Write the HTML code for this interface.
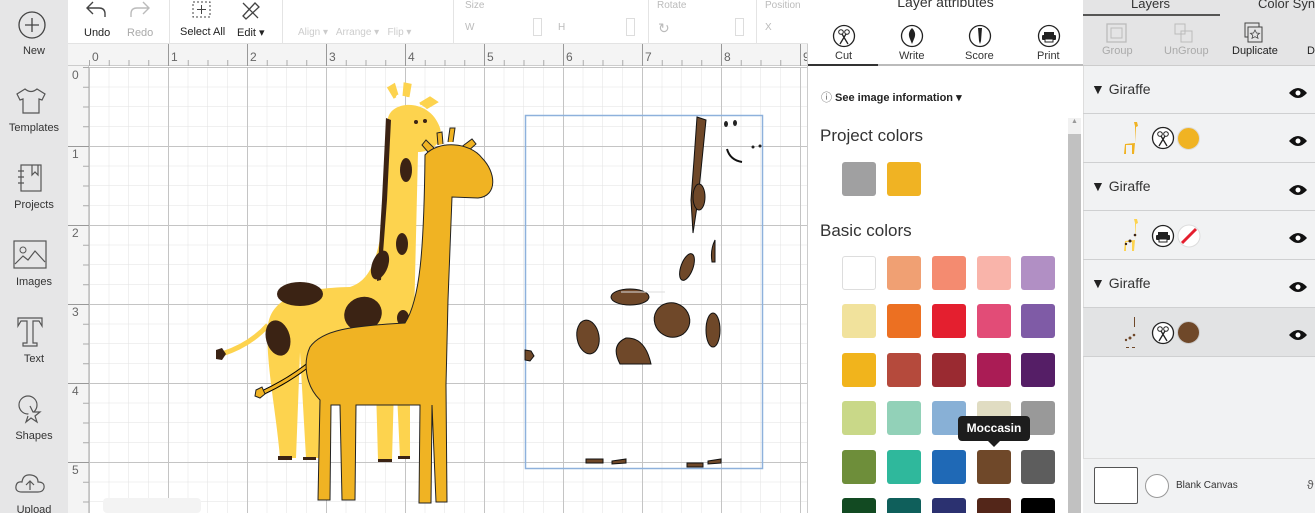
<!DOCTYPE html>
<html><head><meta charset="utf-8"><style>
*{box-sizing:border-box;margin:0;padding:0}
html,body{width:1315px;height:513px;overflow:hidden}
body{font-family:"Liberation Sans",Arial,sans-serif;background:#fff;position:relative;color:#222}
.abs{position:absolute}
.side{left:0;top:0;width:68px;height:513px;background:#e6e6e7}
.si{position:absolute;left:0;width:68px;text-align:center;font-size:11px;color:#333}
.tb{left:68px;top:0;width:740px;height:44px;background:#fff;border-bottom:1px solid #e3e3e3}
.tl{position:absolute;font-size:11px;color:#222;white-space:nowrap}
.fd{color:#ccc}
.sep{position:absolute;top:0;width:1px;height:44px;background:#e4e4e4}
.sw{position:absolute;width:34px;height:34px;border-radius:3px}
.lrow{position:absolute;left:1083px;width:232px;border-bottom:1px solid #cfd0d1}
</style></head><body>

<!-- sidebar -->
<div class="abs side">
 <svg class="abs" style="left:17px;top:10px" width="30" height="30"><circle cx="15" cy="15" r="13" fill="none" stroke="#444" stroke-width="1.3"/><path d="M15 8v14M8 15h14" stroke="#444" stroke-width="1.3"/></svg>
 <div class="si" style="top:45px">New</div>
 <svg class="abs" style="left:14px;top:87px" width="34" height="28"><path d="M11 2 L3 7 L6 13 L9 12 L9 26 L25 26 L25 12 L28 13 L31 7 L23 2 Q17 7 11 2Z" fill="none" stroke="#555" stroke-width="1.2"/></svg>
 <div class="si" style="top:122px">Templates</div>
 <svg class="abs" style="left:17px;top:163px" width="28" height="30"><rect x="4" y="2" width="20" height="26" fill="none" stroke="#555" stroke-width="1.2"/><path d="M15 2v10l3-3 3 3V2M1 8h6M1 14h6M1 20h6" fill="none" stroke="#555" stroke-width="1.2"/></svg>
 <div class="si" style="top:199px">Projects</div>
 <svg class="abs" style="left:13px;top:240px" width="34" height="30"><rect x="1" y="1" width="32" height="27" fill="none" stroke="#555" stroke-width="1.2"/><circle cx="10" cy="10" r="3" fill="none" stroke="#555"/><path d="M2 24 L10 16 L15 20 L22 11 L32 22" fill="none" stroke="#555" stroke-width="1.2"/></svg>
 <div class="si" style="top:276px">Images</div>
 <svg class="abs" style="left:16px;top:316px" width="28" height="32"><path d="M2 2h24v8l-3-5h-6v22h4v3H7v-3h4V5H5l-3 5z" fill="none" stroke="#555" stroke-width="1.2"/></svg>
 <div class="si" style="top:353px">Text</div>
 <svg class="abs" style="left:16px;top:394px" width="30" height="30"><circle cx="12" cy="11" r="9" fill="none" stroke="#555" stroke-width="1.2"/><path d="M14 12 L17 18 L24 18 L19 22 L21 28 L15 24 L10 28 L12 22" fill="#e6e6e7" stroke="#555" stroke-width="1.2"/></svg>
 <div class="si" style="top:430px">Shapes</div>
 <svg class="abs" style="left:14px;top:472px" width="32" height="24"><path d="M8 20 Q1 20 2 14 Q3 9 8 10 Q9 2 17 3 Q24 4 24 10 Q31 10 30 16 Q29 20 24 20Z" fill="none" stroke="#555" stroke-width="1.2"/><path d="M16 18v-8M12 13l4-4 4 4" fill="none" stroke="#555" stroke-width="1.2"/></svg>
 <div class="si" style="top:504px">Upload</div>
</div>

<!-- toolbar -->
<div class="abs tb">
 <svg class="abs" style="left:17px;top:0px" width="22" height="18"><path d="M8 2 L2 8 L8 14 M2 8 H14 Q20 8 20 14 V17" fill="none" stroke="#444" stroke-width="1.4"/></svg>
 <div class="tl" style="left:16px;top:27px">Undo</div>
 <svg class="abs" style="left:61px;top:0px" width="22" height="18"><path d="M14 2 L20 8 L14 14 M20 8 H8 Q2 8 2 14 V17" fill="none" stroke="#bbb" stroke-width="1.4"/></svg>
 <div class="tl fd" style="left:59px;top:27px;color:#aaa">Redo</div>
 <div class="sep" style="left:101px"></div>
 <svg class="abs" style="left:123px;top:0" width="22" height="20"><rect x="2" y="2" width="17" height="15" fill="none" stroke="#444" stroke-dasharray="2 2"/><path d="M10.5 5v9M6 9.5h9" stroke="#444"/></svg>
 <div class="tl" style="left:112px;top:26px">Select All</div>
 <svg class="abs" style="left:172px;top:0" width="22" height="20"><path d="M3 16 L15 3 L19 7 L6 19Z M3 3 L18 18" fill="none" stroke="#444" stroke-width="1.3"/></svg>
 <div class="tl" style="left:169px;top:26px">Edit ▾</div>
 <div class="sep" style="left:214px"></div>
 <div class="tl fd" style="left:230px;top:27px;font-size:10px">Align ▾ &nbsp; Arrange ▾ &nbsp; Flip ▾</div>
 <div class="sep" style="left:385px"></div>
 <div class="tl fd" style="left:397px;top:0px;font-size:10px;color:#bbb">Size</div>
 <div class="tl fd" style="left:397px;top:22px;font-size:10px;color:#bbb">W</div>
 <div class="tl fd" style="left:490px;top:22px;font-size:10px;color:#bbb">H</div>
 <div class="abs" style="left:465px;top:18px;width:9px;height:18px;border:1px solid #ddd"></div>
 <div class="abs" style="left:558px;top:18px;width:9px;height:18px;border:1px solid #ddd"></div>
 <div class="sep" style="left:580px"></div>
 <div class="tl fd" style="left:589px;top:0px;font-size:10px;color:#bbb">Rotate</div>
 <div class="tl fd" style="left:590px;top:20px;font-size:14px;color:#bbb">↻</div>
 <div class="abs" style="left:667px;top:18px;width:9px;height:18px;border:1px solid #ddd"></div>
 <div class="sep" style="left:688px"></div>
 <div class="tl fd" style="left:697px;top:0px;font-size:10px;color:#bbb">Position</div>
 <div class="tl fd" style="left:697px;top:22px;font-size:10px;color:#bbb">X</div>
</div>

<!-- rulers -->
<div class="abs" style="left:68px;top:44px;width:740px;height:22px;background:#f4f4f4;border-bottom:1px solid #ccc"></div>
<div class="abs" style="left:68px;top:66px;width:21px;height:447px;background:#f4f4f4;border-right:1px solid #ccc"></div>

<!-- canvas grid -->
<svg class="abs" style="left:0;top:0" width="808" height="513">
 <defs>
  <pattern id="mi" x="89" y="67" width="19.75" height="19.75" patternUnits="userSpaceOnUse"><path d="M0 0V19.75M0 0H19.75" stroke="#e2e2e2" stroke-width="1" fill="none"/></pattern>
  <pattern id="ma" x="89" y="67" width="79" height="79" patternUnits="userSpaceOnUse"><path d="M0.5 0V79M0 0.5H79" stroke="#c4c4c4" stroke-width="1" fill="none"/></pattern>
  <pattern id="rt" x="89" y="44" width="19.75" height="22" patternUnits="userSpaceOnUse"><path d="M0.5 16V22" stroke="#aaa" fill="none"/></pattern>
  <pattern id="rl" x="68" y="67" width="21" height="19.75" patternUnits="userSpaceOnUse"><path d="M15 0.5H21" stroke="#aaa" fill="none"/></pattern>
 </defs>
 <rect x="89" y="67" width="719" height="446" fill="url(#mi)"/>
 <rect x="89" y="67" width="719" height="446" fill="url(#ma)"/>
 <rect x="89" y="44" width="719" height="22" fill="url(#rt)"/>
 <rect x="68" y="67" width="21" height="446" fill="url(#rl)"/>
 <g fill="#666" font-size="12" font-family="Liberation Sans">
  <text x="92" y="61">0</text><text x="171" y="61">1</text><text x="250" y="61">2</text><text x="329" y="61">3</text><text x="408" y="61">4</text><text x="487" y="61">5</text><text x="566" y="61">6</text><text x="645" y="61">7</text><text x="724" y="61">8</text><text x="803" y="61">9</text>
  <text x="72" y="79">0</text><text x="72" y="158">1</text><text x="72" y="237">2</text><text x="72" y="316">3</text><text x="72" y="395">4</text><text x="72" y="474">5</text>
 </g>
 <g stroke="#999" stroke-width="1"><path d="M168.5 44V66M247.5 44V66M326.5 44V66M405.5 44V66M484.5 44V66M563.5 44V66M642.5 44V66M721.5 44V66M800.5 44V66"/><path d="M68 146.5H89M68 225.5H89M68 304.5H89M68 383.5H89M68 462.5H89"/></g>
 <rect x="103" y="498" width="98" height="15" rx="4" fill="#f3f3f3"/>
 <rect x="807" y="44" width="1" height="469" fill="#ccc"/>

 <!-- back giraffe -->
 <path d="M268 325 Q250 345 222 354" stroke="#fdd34e" stroke-width="5" fill="none"/>
 <path d="M216 350 l6 -2 l4 6 l-4 6 l-6 -1z" fill="#3b2314"/>
 <path d="M388 118 C392 100 430 98 440 128 C444 142 432 152 418 152 L414 320 L410 345 L410 458 L400 458 L395 350 L392 460 L378 460 L375 352 L322 352 L320 458 L306 458 L300 352 L296 458 L280 458 C276 410 265 360 268 325 C272 298 300 288 350 287 C372 280 380 255 385 200 Z" fill="#fdd34e"/>
 <path d="M395 98 l-6 -10 l5 -3 l3 10 M404 96 l1 -12 l5 1 l-2 12 M420 104 l10 -6 l6 4 l-10 6" fill="#fdd34e" stroke="#fdd34e" stroke-width="3"/>
 <path d="M386 118 L391 120 L387 200 L381 280 L377 281 L382 200Z" fill="#3b2314"/>
 <g fill="#3b2314">
  <ellipse cx="300" cy="294" rx="23" ry="12"/><ellipse cx="363" cy="314" rx="19" ry="17" transform="rotate(-20 363 314)"/><ellipse cx="278" cy="338" rx="12" ry="18" transform="rotate(-15 278 338)"/><ellipse cx="380" cy="265" rx="8" ry="15" transform="rotate(20 380 265)"/><ellipse cx="406" cy="170" rx="6" ry="12"/><ellipse cx="402" cy="244" rx="6" ry="11"/><ellipse cx="403" cy="318" rx="6" ry="8"/>
  <circle cx="416" cy="122" r="2"/><circle cx="425" cy="121" r="2"/>
  <rect x="278" y="456" width="14" height="4"/><rect x="303" y="457" width="13" height="3"/><rect x="378" y="459" width="14" height="3"/><rect x="398" y="456" width="12" height="3"/>
 </g>
 <!-- front giraffe -->
 <path d="M312 362 Q290 380 262 393" stroke="#000" stroke-width="5" fill="none"/>
 <path d="M312 362 Q290 380 262 393" stroke="#f0b323" stroke-width="3" fill="none"/>
 <path d="M256 390 l6 -3 l3 7 l-5 4 l-5 -2z" fill="#f0b323" stroke="#222" stroke-width="1"/>
 <path d="M428 152 l-6 -7 l4 -5 l8 8 M438 145 l-1 -12 l5 -1 l1 12 M448 142 l2 -14 l5 0 l-2 14 M460 148 l12 -9 l4 5 l-10 9" fill="#f0b323" stroke="#222" stroke-width="1"/>
 <path d="M425 155 C438 140 470 142 482 158 C496 172 498 196 478 198 L452 197 L448 300 L446 385 L447 502 L436 502 L432 405 L431 503 L419 503 L420 405 L356 405 L355 500 L342 500 L340 405 L331 405 L330 500 L318 500 L320 400 C305 385 303 362 310 347 C322 330 350 326 405 323 C420 300 424 250 425 155 Z" fill="#f0b323" stroke="#222" stroke-width="1"/>
 <!-- outline parts -->
 <rect x="525.5" y="115.5" width="237" height="353" fill="none" stroke="#8eb1dc" stroke-width="1.5"/>
 <g fill="#6f4829" stroke="#111" stroke-width="1">
  <path d="M697 117 L706 120 L702 160 L698 200 L693 233 L691 200 L694 160Z"/>
  <ellipse cx="699" cy="197" rx="6" ry="13"/>
  <ellipse cx="687" cy="267" rx="6" ry="14" transform="rotate(20 687 267)"/>
  <path d="M715 240 Q710 250 712 262 L715 262Z"/>
  <ellipse cx="630" cy="297" rx="19" ry="8"/>
  <ellipse cx="672" cy="320" rx="18" ry="17" transform="rotate(30 672 320)"/>
  <ellipse cx="588" cy="337" rx="11" ry="17" transform="rotate(-10 588 337)"/>
  <path d="M620 364 Q610 345 626 338 Q645 337 651 364Z"/>
  <ellipse cx="713" cy="330" rx="7" ry="17"/>
  <path d="M525 350 l6 1 l3 5 l-4 5 l-5 -1z"/>
  <rect x="586" y="459" width="17" height="4"/><path d="M612 461 l14 -2 l0 4 l-14 1z"/><rect x="687" y="463" width="16" height="4"/><path d="M708 461 l13 -2 l0 4 l-13 1z"/>
 </g>
 <g fill="#222"><ellipse cx="726" cy="124" rx="2" ry="3"/><ellipse cx="735" cy="123" rx="2" ry="3"/><circle cx="753" cy="147" r="1.5"/><circle cx="760" cy="146" r="1.5"/></g>
 <path d="M727 149 Q730 160 742 162" stroke="#111" stroke-width="2" fill="none"/>
 <path d="M621 292 H665" stroke="#ddd" stroke-width="1"/>
</svg>

<!-- layer attributes panel -->
<div class="abs" style="left:808px;top:0;width:275px;height:513px;background:#fff">
 <div class="abs" style="left:0;top:-6px;width:275px;text-align:center;font-size:14px;color:#333">Layer attributes</div>
 <svg class="abs" style="left:24px;top:24px" width="24" height="24"><circle cx="12" cy="12" r="10.5" fill="none" stroke="#222" stroke-width="1.3"/><circle cx="9" cy="8" r="2.3" fill="none" stroke="#222"/><circle cx="15" cy="8" r="2.3" fill="none" stroke="#222"/><path d="M10 10 L16 20 M14 10 L8 20" stroke="#222" stroke-width="1.3"/></svg>
 <svg class="abs" style="left:92px;top:24px" width="24" height="24"><circle cx="12" cy="12" r="10.5" fill="none" stroke="#222" stroke-width="1.3"/><path d="M12 4 Q7 9 10 15 L12 20 L14 15 Q17 9 12 4Z" fill="#222"/></svg>
 <svg class="abs" style="left:160px;top:24px" width="24" height="24"><circle cx="12" cy="12" r="10.5" fill="none" stroke="#222" stroke-width="1.3"/><path d="M10 4 H14 L13 17 L12 20 L11 17Z" fill="#222"/></svg>
 <svg class="abs" style="left:229px;top:24px" width="24" height="24"><circle cx="12" cy="12" r="10.5" fill="none" stroke="#222" stroke-width="1.3"/><rect x="7" y="8" width="10" height="3" fill="#222"/><rect x="5" y="11" width="14" height="5" rx="1" fill="#222"/><rect x="8" y="15" width="8" height="3" fill="#fff" stroke="#222"/></svg>
 <div class="tl" style="left:27px;top:50px;color:#333">Cut</div>
 <div class="tl" style="left:91px;top:50px;color:#333">Write</div>
 <div class="tl" style="left:157px;top:50px;color:#333">Score</div>
 <div class="tl" style="left:229px;top:50px;color:#333">Print</div>
 <div class="abs" style="left:0;top:64px;width:275px;height:2px;background:#bbb"></div>
 <div class="abs" style="left:0;top:64px;width:70px;height:2px;background:#333"></div>
 <div class="tl" style="left:13px;top:89px;font-size:11px;font-weight:bold;color:#222"><span style="font-weight:normal;color:#666">ⓘ</span> See image information ▾</div>
 <div class="abs" style="left:12px;top:126px;font-size:17px;color:#333">Project colors</div>
 <div class="sw" style="left:34px;top:162px;background:#a0a0a1"></div>
 <div class="sw" style="left:79px;top:162px;background:#f0b323"></div>
 <div class="abs" style="left:12px;top:221px;font-size:17px;color:#333">Basic colors</div>
 <div class="abs" style="left:260px;top:118px;width:13px;height:395px;background:#c1c1c1"></div>
 <div class="abs" style="left:260px;top:118px;width:13px;height:16px;background:#f1f1f1;font-size:7px;color:#999;text-align:center">▲</div>
</div>
<div class="sw" style="left:842px;top:256px;border:1px solid #ddd;background:#fff"></div>
<div class="sw" style="left:887px;top:256px;background:#f0a073"></div>
<div class="sw" style="left:932px;top:256px;background:#f48b70"></div>
<div class="sw" style="left:977px;top:256px;background:#f9b4aa"></div>
<div class="sw" style="left:1021px;top:256px;background:#b18fc4"></div>
<div class="sw" style="left:842px;top:304px;background:#f1e29c"></div>
<div class="sw" style="left:887px;top:304px;background:#ec7022"></div>
<div class="sw" style="left:932px;top:304px;background:#e41f2f"></div>
<div class="sw" style="left:977px;top:304px;background:#e24c77"></div>
<div class="sw" style="left:1021px;top:304px;background:#7f5ba6"></div>
<div class="sw" style="left:842px;top:353px;background:#f1b41c"></div>
<div class="sw" style="left:887px;top:353px;background:#b54a3c"></div>
<div class="sw" style="left:932px;top:353px;background:#9a2a31"></div>
<div class="sw" style="left:977px;top:353px;background:#aa1c55"></div>
<div class="sw" style="left:1021px;top:353px;background:#551e66"></div>
<div class="sw" style="left:842px;top:401px;background:#c9d888"></div>
<div class="sw" style="left:887px;top:401px;background:#92d1b8"></div>
<div class="sw" style="left:932px;top:401px;background:#88b0d6"></div>
<div class="sw" style="left:977px;top:401px;background:#e0dcc2"></div>
<div class="sw" style="left:1021px;top:401px;background:#999999"></div>
<div class="sw" style="left:842px;top:450px;background:#6e8e3a"></div>
<div class="sw" style="left:887px;top:450px;background:#2fb89c"></div>
<div class="sw" style="left:932px;top:450px;background:#1f69b6"></div>
<div class="sw" style="left:977px;top:450px;background:#6f4829"></div>
<div class="sw" style="left:1021px;top:450px;background:#5d5d5d"></div>
<div class="sw" style="left:842px;top:498px;background:#124a22"></div>
<div class="sw" style="left:887px;top:498px;background:#0f5f5b"></div>
<div class="sw" style="left:932px;top:498px;background:#2b3170"></div>
<div class="sw" style="left:977px;top:498px;background:#532619"></div>
<div class="sw" style="left:1021px;top:498px;background:#000"></div>
<div class="abs" style="left:958px;top:416px;width:72px;height:25px;background:#1d1d1d;border-radius:4px;color:#fff;font-size:12px;font-weight:bold;text-align:center;line-height:25px">Moccasin</div>
<div class="abs" style="left:988px;top:441px;width:0;height:0;border-left:6px solid transparent;border-right:6px solid transparent;border-top:6px solid #1d1d1d"></div>

<!-- layers panel -->
<div class="abs" style="left:1083px;top:0;width:232px;height:513px;background:#f1f2f3;border-left:1px solid #ddd"></div>
<div class="abs" style="left:1083px;top:0;width:232px;height:66px;background:#e4e4e5;border-bottom:1px solid #ccc"></div>
<div class="tl" style="left:1131px;top:-4px;font-size:13px;color:#333">Layers</div>
<div class="tl" style="left:1258px;top:-4px;font-size:13px;color:#333">Color Sync</div>
<div class="abs" style="left:1083px;top:14px;width:137px;height:2px;background:#555"></div>
<svg class="abs" style="left:1105px;top:22px" width="24" height="22"><rect x="2" y="2" width="19" height="18" fill="none" stroke="#bbb" stroke-width="1.3"/><rect x="6" y="6" width="11" height="10" fill="none" stroke="#bbb"/></svg>
<svg class="abs" style="left:1172px;top:22px" width="24" height="22"><rect x="3" y="2" width="10" height="10" fill="none" stroke="#bbb"/><rect x="9" y="9" width="11" height="11" fill="none" stroke="#bbb"/></svg>
<svg class="abs" style="left:1241px;top:22px" width="24" height="22"><rect x="4" y="1" width="14" height="14" fill="none" stroke="#444"/><rect x="7" y="5" width="14" height="15" fill="#e4e4e5" stroke="#444"/><path d="M14 8 l1.5 3 3 .3 -2.3 2 .8 3 -3-1.6 -3 1.6 .8-3 -2.3-2 3-.3z" fill="none" stroke="#444" stroke-width=".8"/></svg>
<div class="tl" style="left:1102px;top:45px;color:#aaa">Group</div>
<div class="tl" style="left:1164px;top:45px;color:#aaa">UnGroup</div>
<div class="tl" style="left:1232px;top:45px;color:#222">Duplicate</div>
<div class="tl" style="left:1307px;top:45px;color:#222">D</div>

<div class="lrow" style="top:66px;height:48px"></div>
<div class="lrow" style="top:114px;height:49px"></div>
<div class="lrow" style="top:163px;height:48px"></div>
<div class="lrow" style="top:211px;height:49px"></div>
<div class="lrow" style="top:260px;height:48px"></div>
<div class="lrow" style="top:308px;height:49px;background:#e2e3e4"></div>
<div class="tl" style="left:1091px;top:81px;font-size:14px;color:#222">▼ <span style="color:#333">Giraffe</span></div>
<div class="tl" style="left:1091px;top:178px;font-size:14px;color:#222">▼ <span style="color:#333">Giraffe</span></div>
<div class="tl" style="left:1091px;top:275px;font-size:14px;color:#222">▼ <span style="color:#333">Giraffe</span></div>
<svg class="abs" style="left:1288px;top:0" width="20" height="350"><g fill="#111"><path d="M1 93 Q10 83 19 93 Q10 103 1 93Z"/><path d="M1 141 Q10 131 19 141 Q10 151 1 141Z"/><path d="M1 190 Q10 180 19 190 Q10 200 1 190Z"/><path d="M1 238 Q10 228 19 238 Q10 248 1 238Z"/><path d="M1 287 Q10 277 19 287 Q10 297 1 287Z"/><path d="M1 335 Q10 325 19 335 Q10 345 1 335Z"/></g><g fill="#fff"><circle cx="10" cy="93" r="2.5"/><circle cx="10" cy="141" r="2.5"/><circle cx="10" cy="190" r="2.5"/><circle cx="10" cy="238" r="2.5"/><circle cx="10" cy="287" r="2.5"/><circle cx="10" cy="335" r="2.5"/></g></svg>
<!-- layer thumbnails -->
<svg class="abs" style="left:1120px;top:120px" width="24" height="36"><path d="M14 2 l3 0 l1 4 l-2 1 l-1 16 l-10 1 l-1 10 l2 0 l0 -9 l6 0 l0 9 l2 0 l1 -11 l0 -17z" fill="#f0b323"/></svg>
<svg class="abs" style="left:1120px;top:217px" width="24" height="36"><path d="M14 2 l3 0 l1 4 l-2 1 l-1 16 l-10 1 l-1 10 l2 0 l0 -9 l6 0 l0 9 l2 0 l1 -11 l0 -17z" fill="#fdd34e"/><g fill="#3b2314"><circle cx="10" cy="24" r="1.5"/><circle cx="15" cy="18" r="1.3"/><circle cx="6" cy="27" r="1.2"/></g></svg>
<svg class="abs" style="left:1120px;top:314px" width="24" height="36"><g fill="#6f4829"><rect x="14" y="3" width="1" height="10"/><circle cx="10" cy="24" r="1.5"/><circle cx="14" cy="21" r="1.3"/><circle cx="6" cy="26" r="1.2"/><rect x="6" y="33" width="3" height="1"/><rect x="12" y="33" width="3" height="1"/></g></svg>
<svg class="abs" style="left:1151px;top:126px" width="26" height="26"><circle cx="12" cy="12" r="10.5" fill="#fff" stroke="#222" stroke-width="1.3"/><circle cx="9" cy="8" r="2.3" fill="none" stroke="#222"/><circle cx="15" cy="8" r="2.3" fill="none" stroke="#222"/><path d="M10 10 L16 20 M14 10 L8 20" stroke="#222" stroke-width="1.3"/></svg>
<div class="abs" style="left:1177px;top:127px;width:23px;height:23px;border-radius:50%;background:#f0b323;border:1px solid #ddd"></div>
<svg class="abs" style="left:1151px;top:224px" width="26" height="26"><circle cx="12" cy="12" r="10.5" fill="#fff" stroke="#222" stroke-width="1.3"/><rect x="7" y="8" width="10" height="3" fill="#222"/><rect x="5" y="11" width="14" height="5" rx="1" fill="#222"/><rect x="8" y="15" width="8" height="3" fill="#fff" stroke="#222"/></svg>
<svg class="abs" style="left:1177px;top:224px" width="24" height="24"><circle cx="12" cy="12" r="11" fill="#fff" stroke="#ddd"/><path d="M5 19 L19 5" stroke="#e41f2f" stroke-width="3"/></svg>
<svg class="abs" style="left:1151px;top:321px" width="26" height="26"><circle cx="12" cy="12" r="10.5" fill="#fff" stroke="#222" stroke-width="1.3"/><circle cx="9" cy="8" r="2.3" fill="none" stroke="#222"/><circle cx="15" cy="8" r="2.3" fill="none" stroke="#222"/><path d="M10 10 L16 20 M14 10 L8 20" stroke="#222" stroke-width="1.3"/></svg>
<div class="abs" style="left:1177px;top:321px;width:23px;height:23px;border-radius:50%;background:#6f4829;border:1px solid #ccc"></div>

<div class="abs" style="left:1083px;top:458px;width:232px;height:55px;background:#f1f2f3;border-top:1px solid #ddd"></div>
<div class="abs" style="left:1094px;top:467px;width:44px;height:37px;background:#fff;border:1px solid #555;border-radius:2px"></div>
<div class="abs" style="left:1145px;top:474px;width:24px;height:24px;border-radius:50%;background:#fff;border:1px solid #999"></div>
<div class="tl" style="left:1176px;top:480px;font-size:10px;color:#333">Blank Canvas</div>
<div class="tl" style="left:1307px;top:478px;font-size:12px;color:#555">ϑ</div>
</body></html>
